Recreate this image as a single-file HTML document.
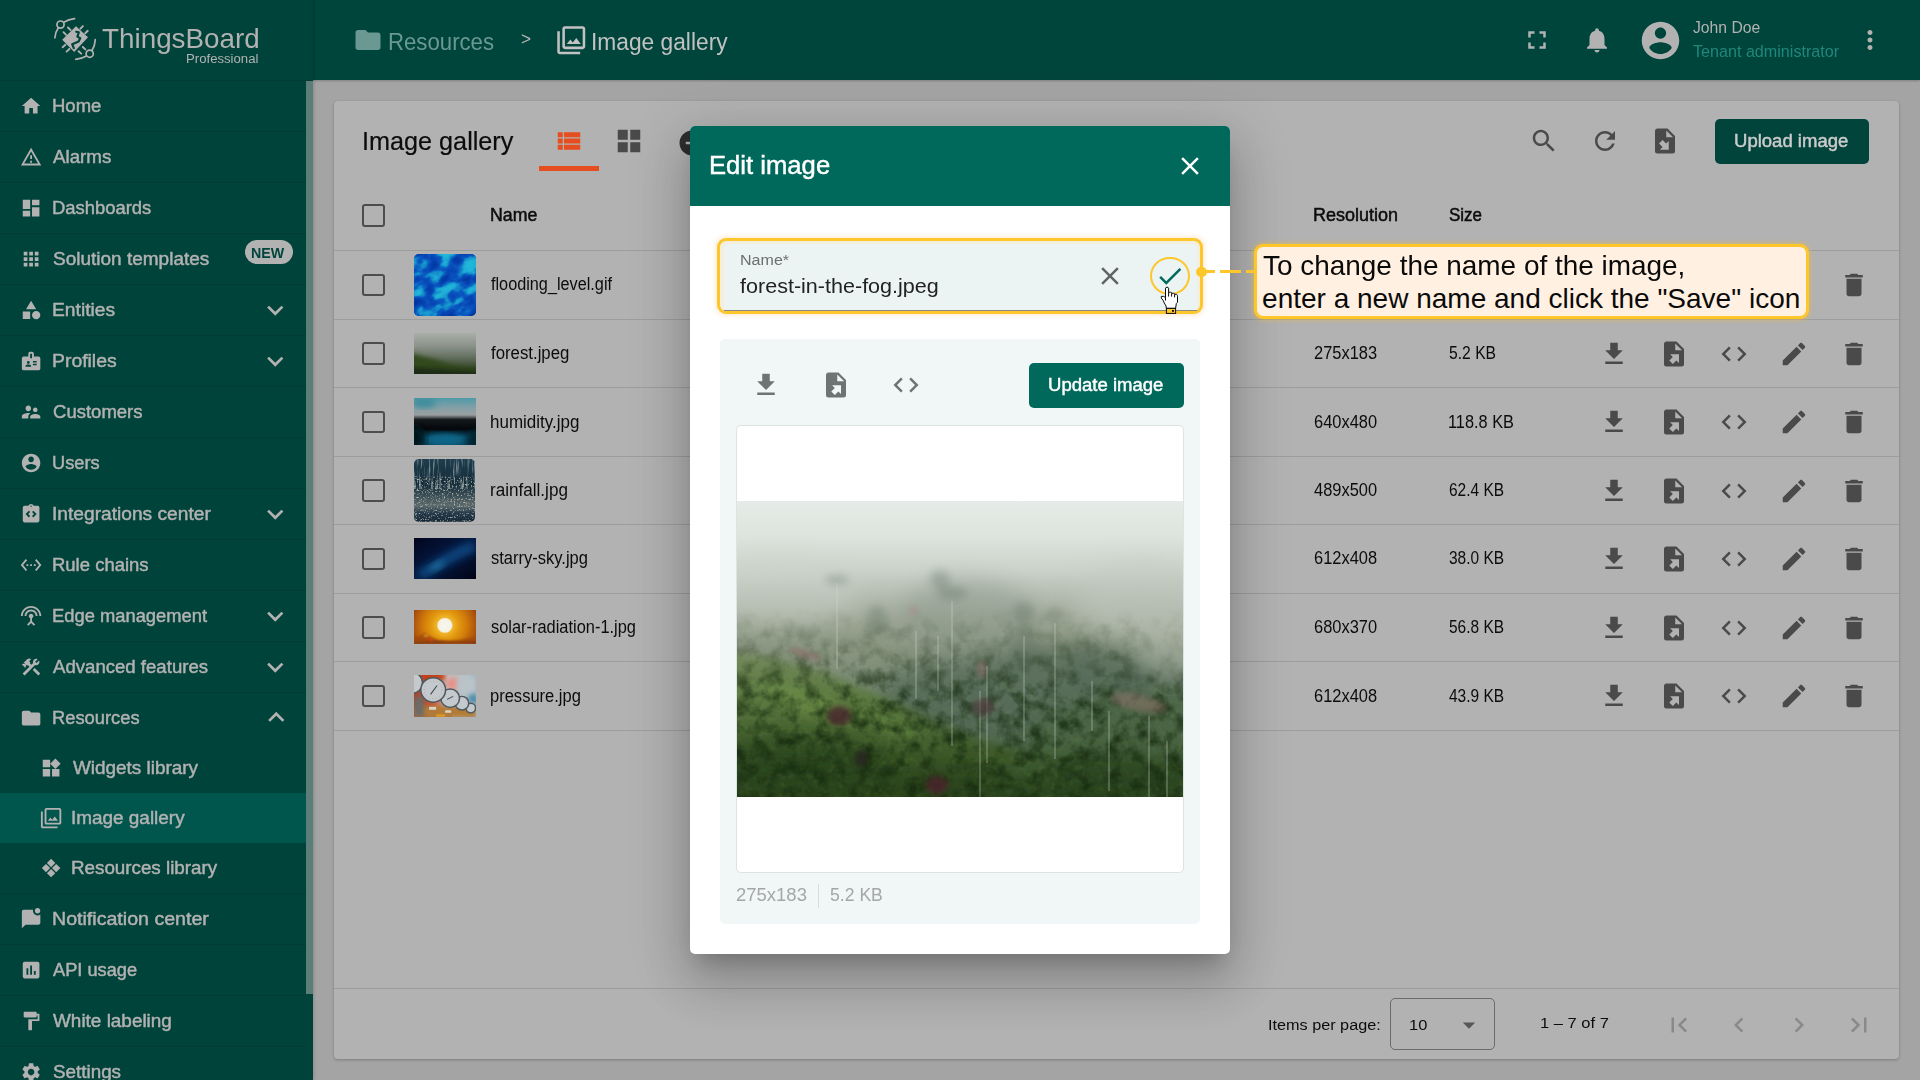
<!DOCTYPE html>
<html lang="en"><head><meta charset="utf-8"><title>ThingsBoard - Image gallery</title>
<style>
html,body{margin:0;padding:0}
body{width:1920px;height:1080px;overflow:hidden;position:relative;background:#a4a4a4;font-family:"Liberation Sans",sans-serif}
.g{position:absolute;left:0;top:0;width:0;height:0}
.b,.i,.t{position:absolute;display:block}
.t{white-space:nowrap;transform-origin:0 50%}
.b>svg{display:block}
</style></head>
<body>
<div class="g" id="app-shell">
<div class="b" style="left:0px;top:0px;width:1920px;height:80px;background:#00453c;box-shadow:0 1px 2px rgba(0,0,0,.22);"></div>
<div class="b" style="left:0px;top:0px;width:313px;height:1080px;background:#00433a;box-shadow:1px 0 3px rgba(0,0,0,.16);"></div>
<div class="b" style="left:313px;top:0px;width:1px;height:80px;background:#003a32;"></div>
<div class="b" style="left:306px;top:81px;width:7px;height:913px;background:#5c7e79;"></div>
<svg class="i" style="left:48px;top:12px" width="60" height="54" viewBox="48 12 60 54">
<g fill="none" stroke="#b2b2b2" stroke-width="1.7" stroke-linecap="round">
<circle cx="60.5" cy="24.6" r="3.6"/>
<path d="M63.8 22.3C67 20.3 70.500 19.200 74.600 18.700M58.300 27.800C56.200 30.800 55.200 34 54.900 37.800"/>
<circle cx="89.700" cy="53.700" r="3.600"/>
<path d="M86.400 56C83.200 57.900 79.700 59 75.700 59.300M92 50.500C94 47.500 95 44 95.300 39.600"/>
<path d="M68 27.500l2.600 2.600M63.500 32.200l2.600 2.600M80.500 28.700l2.400-2.600M85.200 33.200l2.600-2.400M82.800 47l2.600 2.400M78.600 51.200l2.600 2.400M62.600 47.200l2.800-2.400M66.600 51.600l2.800-2.600" stroke-width="1.9"/>
</g>
<path fill="#b2b2b2" d="M62.200 39.700L76 26.300 88 37.200 74.200 52z"/>
<path fill="none" stroke="#00443b" stroke-width="2.2" stroke-linecap="round" stroke-linejoin="round" d="M76.200 31.800l2.600 0.600l-1.400 4.200l2.800 1.600l-1.600 3.200l-6.400 2.800l1.600 4"/>
</svg>
<span class="t" style="left:101.8px;top:21px;font-size:28.1px;line-height:36px;color:#b2b2b2;transform:scaleX(0.9907);">ThingsBoard</span>
<span class="t" style="left:186.48px;top:50px;font-size:12.91px;line-height:17px;color:#b2b2b2;transform:scaleX(1.0195);">Professional</span>
<div class="b" style="left:0px;top:80px;width:313px;height:1px;background:#003c34;"></div>
<svg class="i" style="left:20.15px;top:94.7px;" width="22.2" height="22.2" viewBox="0 0 24 24"><path fill="#b2b2b2" d="M10 20v-6h4v6h5v-8h3L12 3 2 12h3v8z"/></svg>
<span class="t" style="left:51.98px;top:95px;font-size:18.08px;line-height:23px;color:#b2b2b2;-webkit-text-stroke:0.45px #b2b2b2;transform:scaleX(1.0229);">Home</span>
<div class="b" style="left:0px;top:131px;width:306px;height:1px;background:#003c34;"></div>
<svg class="i" style="left:20.15px;top:145.7px;" width="22.2" height="22.2" viewBox="0 0 24 24"><path fill="#b2b2b2" d="M12 5.99L19.53 19H4.47L12 5.99M12 2L1 21h22L12 2zm1 14h-2v2h2v-2zm0-6h-2v4h2v-4z"/></svg>
<span class="t" style="left:53px;top:146px;font-size:18.08px;line-height:23px;color:#b2b2b2;-webkit-text-stroke:0.45px #b2b2b2;transform:scaleX(1.0363);">Alarms</span>
<div class="b" style="left:0px;top:182px;width:306px;height:1px;background:#003c34;"></div>
<svg class="i" style="left:20.15px;top:196.7px;" width="22.2" height="22.2" viewBox="0 0 24 24"><path fill="#b2b2b2" d="M3 13h8V3H3v10zm0 8h8v-6H3v6zm10 0h8V11h-8v10zm0-18v6h8V3h-8z"/></svg>
<span class="t" style="left:51.98px;top:197px;font-size:18.08px;line-height:23px;color:#b2b2b2;-webkit-text-stroke:0.45px #b2b2b2;transform:scaleX(1.0188);">Dashboards</span>
<div class="b" style="left:0px;top:233px;width:306px;height:1px;background:#003c34;"></div>
<svg class="i" style="left:20.15px;top:247.7px;" width="22.2" height="22.2" viewBox="0 0 24 24"><path fill="#b2b2b2" d="M4 8h4V4H4v4zm6 12h4v-4h-4v4zm-6 0h4v-4H4v4zm0-6h4v-4H4v4zm6 0h4v-4h-4v4zm6-10v4h4V4h-4zm-6 4h4V4h-4v4zm6 6h4v-4h-4v4zm0 6h4v-4h-4v4z"/></svg>
<span class="t" style="left:53px;top:248px;font-size:18.08px;line-height:23px;color:#b2b2b2;-webkit-text-stroke:0.45px #b2b2b2;transform:scaleX(1.0508);">Solution templates</span>
<div class="b" style="left:244.5px;top:239.6px;width:48.7px;height:24.9px;background:#b2b2b2;border-radius:13px;"></div>
<span class="t" style="left:251.28px;top:243px;font-size:15.49px;line-height:20px;color:#00443b;font-weight:700;transform:scaleX(0.9180);">NEW</span>
<div class="b" style="left:0px;top:284px;width:306px;height:1px;background:#003c34;"></div>
<svg class="i" style="left:20.15px;top:298.7px;" width="22.2" height="22.2" viewBox="0 0 24 24"><path fill="#b2b2b2" d="M12 2l-5.5 9h11zM17.5 13a4.5 4.5 0 1 0 0 9a4.5 4.5 0 1 0 0-9zM3 13.5h8v8H3z"/></svg>
<span class="t" style="left:51.94px;top:299px;font-size:18.08px;line-height:23px;color:#b2b2b2;-webkit-text-stroke:0.45px #b2b2b2;transform:scaleX(1.0645);">Entities</span>
<svg class="i" style="left:259.35px;top:293.75px;" width="32.5" height="32.5" viewBox="0 0 24 24"><path fill="#b2b2b2" d="M16.59 8.59L12 13.17 7.41 8.59 6 10l6 6 6-6z"/></svg>
<div class="b" style="left:0px;top:335px;width:306px;height:1px;background:#003c34;"></div>
<svg class="i" style="left:20.15px;top:349.7px;" width="22.2" height="22.2" viewBox="0 0 24 24"><path fill="#b2b2b2" d="M20 7h-5V4c0-1.1-.9-2-2-2h-2c-1.1 0-2 .9-2 2v3H4c-1.1 0-2 .9-2 2v11c0 1.1.9 2 2 2h16c1.1 0 2-.9 2-2V9c0-1.1-.9-2-2-2zM9 12c.83 0 1.5.67 1.5 1.5S9.83 15 9 15s-1.5-.67-1.5-1.5S8.17 12 9 12zm3 6H6v-.75c0-1 2-1.5 3-1.5s3 .5 3 1.5V18zm1-9h-2V4h2v5zm5 7.5h-4V15h4v1.5zm0-3h-4V12h4v1.5z"/></svg>
<span class="t" style="left:51.93px;top:350px;font-size:18.08px;line-height:23px;color:#b2b2b2;-webkit-text-stroke:0.45px #b2b2b2;transform:scaleX(1.0719);">Profiles</span>
<svg class="i" style="left:259.35px;top:344.75px;" width="32.5" height="32.5" viewBox="0 0 24 24"><path fill="#b2b2b2" d="M16.59 8.59L12 13.17 7.41 8.59 6 10l6 6 6-6z"/></svg>
<div class="b" style="left:0px;top:386px;width:306px;height:1px;background:#003c34;"></div>
<svg class="i" style="left:20.15px;top:400.7px;" width="22.2" height="22.2" viewBox="0 0 24 24"><path fill="#b2b2b2" d="M16.5 12c1.38 0 2.49-1.12 2.49-2.5S17.88 7 16.5 7C15.12 7 14 8.12 14 9.5s1.12 2.5 2.5 2.5zM9 11c1.66 0 2.99-1.34 2.99-3S10.66 5 9 5C7.34 5 6 6.34 6 8s1.34 3 3 3zm7.5 3c-1.83 0-5.5.92-5.5 2.75V19h11v-2.25c0-1.83-3.67-2.75-5.5-2.75zM9 13c-2.33 0-7 1.17-7 3.5V19h7v-2.25c0-.85.33-2.34 2.37-3.47C10.5 13.1 9.66 13 9 13z"/></svg>
<span class="t" style="left:53px;top:401px;font-size:18.08px;line-height:23px;color:#b2b2b2;-webkit-text-stroke:0.45px #b2b2b2;transform:scaleX(1.0245);">Customers</span>
<div class="b" style="left:0px;top:437px;width:306px;height:1px;background:#003c34;"></div>
<svg class="i" style="left:20.15px;top:451.7px;" width="22.2" height="22.2" viewBox="0 0 24 24"><path fill="#b2b2b2" d="M12 2C6.48 2 2 6.48 2 12s4.48 10 10 10 10-4.48 10-10S17.52 2 12 2zm0 3c1.66 0 3 1.34 3 3s-1.34 3-3 3-3-1.34-3-3 1.34-3 3-3zm0 14.2c-2.5 0-4.71-1.28-6-3.22.03-1.99 4-3.08 6-3.08 1.99 0 5.97 1.09 6 3.08-1.29 1.94-3.5 3.22-6 3.22z"/></svg>
<span class="t" style="left:51.99px;top:452px;font-size:18.08px;line-height:23px;color:#b2b2b2;-webkit-text-stroke:0.45px #b2b2b2;transform:scaleX(1.0072);">Users</span>
<div class="b" style="left:0px;top:488px;width:306px;height:1px;background:#003c34;"></div>
<svg class="i" style="left:20.15px;top:502.7px;" width="22.2" height="22.2" viewBox="0 0 24 24"><path fill="#b2b2b2" d="M19 3h-4.18C14.4 1.84 13.3 1 12 1s-2.4.84-2.82 2H5c-1.1 0-2 .9-2 2v14c0 1.1.9 2 2 2h14c1.1 0 2-.9 2-2V5c0-1.1-.9-2-2-2zm-8 11.17l-1.41 1.42L6 12l3.59-3.59L11 9.83 8.83 12 11 14.17zm1-9.92c-.41 0-.75-.34-.75-.75s.34-.75.75-.75.75.34.75.75-.34.75-.75.75zm2.41 11.34L13 14.17 15.17 12 13 9.83l1.41-1.42L18 12l-3.59 3.59z"/></svg>
<span class="t" style="left:51.94px;top:503px;font-size:18.08px;line-height:23px;color:#b2b2b2;-webkit-text-stroke:0.45px #b2b2b2;transform:scaleX(1.0607);">Integrations center</span>
<svg class="i" style="left:259.35px;top:497.75px;" width="32.5" height="32.5" viewBox="0 0 24 24"><path fill="#b2b2b2" d="M16.59 8.59L12 13.17 7.41 8.59 6 10l6 6 6-6z"/></svg>
<div class="b" style="left:0px;top:539px;width:306px;height:1px;background:#003c34;"></div>
<svg class="i" style="left:20.15px;top:553.7px;" width="22.2" height="22.2" viewBox="0 0 24 24"><path fill="#b2b2b2" d="M7.77 6.76L6.23 5.48.82 12l5.41 6.52 1.54-1.28L3.42 12l4.35-5.24zM7 13h2v-2H7v2zm10-2h-2v2h2v-2zm-6 2h2v-2h-2v2zm6.77-7.52l-1.54 1.28L20.58 12l-4.35 5.24 1.54 1.28L23.18 12l-5.41-6.52z"/></svg>
<span class="t" style="left:51.98px;top:554px;font-size:18.08px;line-height:23px;color:#b2b2b2;-webkit-text-stroke:0.45px #b2b2b2;transform:scaleX(1.0223);">Rule chains</span>
<div class="b" style="left:0px;top:590px;width:306px;height:1px;background:#003c34;"></div>
<svg class="i" style="left:20.15px;top:604.7px;" width="22.2" height="22.2" viewBox="0 0 24 24"><path fill="#b2b2b2" d="M12 5c-3.87 0-7 3.13-7 7h2c0-2.76 2.24-5 5-5s5 2.24 5 5h2c0-3.87-3.13-7-7-7zm1 9.29c.88-.39 1.5-1.26 1.5-2.29 0-1.38-1.12-2.5-2.5-2.5S9.5 10.62 9.5 12c0 1.02.62 1.9 1.5 2.29v3.3L7.59 21 9 22.41l3-3 3 3L16.41 21 13 17.59v-3.3zM12 1C5.93 1 1 5.93 1 12h2c0-4.97 4.03-9 9-9s9 4.03 9 9h2c0-6.07-4.93-11-11-11z"/></svg>
<span class="t" style="left:51.99px;top:605px;font-size:18.08px;line-height:23px;color:#b2b2b2;-webkit-text-stroke:0.45px #b2b2b2;transform:scaleX(1.0149);">Edge management</span>
<svg class="i" style="left:259.35px;top:599.75px;" width="32.5" height="32.5" viewBox="0 0 24 24"><path fill="#b2b2b2" d="M16.59 8.59L12 13.17 7.41 8.59 6 10l6 6 6-6z"/></svg>
<div class="b" style="left:0px;top:641px;width:306px;height:1px;background:#003c34;"></div>
<svg class="i" style="left:20.15px;top:655.7px;" width="22.2" height="22.2" viewBox="0 0 24 24"><path fill="#b2b2b2" d="M13.783 15.172l2.121-2.121 5.996 5.996-2.121 2.121zM17.5 10c1.93 0 3.5-1.57 3.5-3.5 0-.58-.16-1.12-.41-1.6l-2.7 2.7-1.49-1.49 2.7-2.7c-.48-.25-1.02-.41-1.6-.41C15.57 3 14 4.57 14 6.5c0 .41.08.8.21 1.16l-1.85 1.85-1.78-1.78.71-.71-1.41-1.41L12 3.49c-1.17-1.17-3.07-1.17-4.24 0L4.22 7.03l1.41 1.41H2.81l-.71.71 3.54 3.54.71-.71V9.15l1.41 1.41.71-.71 1.78 1.78-7.41 7.41 2.12 2.12L16.34 9.79c.36.13.75.21 1.16.21z"/></svg>
<span class="t" style="left:53px;top:656px;font-size:18.08px;line-height:23px;color:#b2b2b2;-webkit-text-stroke:0.45px #b2b2b2;transform:scaleX(1.0285);">Advanced features</span>
<svg class="i" style="left:259.35px;top:650.75px;" width="32.5" height="32.5" viewBox="0 0 24 24"><path fill="#b2b2b2" d="M16.59 8.59L12 13.17 7.41 8.59 6 10l6 6 6-6z"/></svg>
<div class="b" style="left:0px;top:692px;width:306px;height:1px;background:#003c34;"></div>
<svg class="i" style="left:20.15px;top:706.7px;" width="22.2" height="22.2" viewBox="0 0 24 24"><path fill="#b2b2b2" d="M10 4H4c-1.1 0-1.99.9-1.99 2L2 18c0 1.1.9 2 2 2h16c1.1 0 2-.9 2-2V8c0-1.1-.9-2-2-2h-8l-2-2z"/></svg>
<span class="t" style="left:51.99px;top:707px;font-size:18.08px;line-height:23px;color:#b2b2b2;-webkit-text-stroke:0.45px #b2b2b2;transform:scaleX(1.0132);">Resources</span>
<svg class="i" style="left:260.35px;top:701.45px;" width="32.5" height="32.5" viewBox="0 0 24 24"><path fill="#b2b2b2" d="M12 8l-6 6 1.41 1.41L12 10.83l4.59 4.58L18 14z"/></svg>
<svg class="i" style="left:40.15px;top:756.7px;" width="22.2" height="22.2" viewBox="0 0 24 24"><path fill="#b2b2b2" d="M13 13v8h8v-8h-8zM3 21h8v-8H3v8zM3 3v8h8V3H3zm13.66-1.31L11 7.34 16.66 13l5.66-5.66-5.66-5.65z"/></svg>
<span class="t" style="left:72.5px;top:757px;font-size:18.08px;line-height:23px;color:#b2b2b2;-webkit-text-stroke:0.45px #b2b2b2;transform:scaleX(1.0460);">Widgets library</span>
<div class="b" style="left:0px;top:793px;width:306px;height:50px;background:#00554d;"></div>
<svg class="i" style="left:40.15px;top:806.7px;" width="22.2" height="22.2" viewBox="0 0 24 24"><path fill="#b2b2b2" d="M15.96 10.29l-2.75 3.54-1.96-2.36L8.5 15h11l-3.54-4.71zM3 5H1v16c0 1.1.9 2 2 2h16v-2H3V5zm18-4H7c-1.1 0-2 .9-2 2v14c0 1.1.9 2 2 2h14c1.1 0 2-.9 2-2V3c0-1.1-.9-2-2-2zm0 16H7V3h14v14z"/></svg>
<span class="t" style="left:71.45px;top:807px;font-size:18.08px;line-height:23px;color:#b2b2b2;-webkit-text-stroke:0.45px #b2b2b2;transform:scaleX(1.0467);">Image gallery</span>
<svg class="i" style="left:40.15px;top:856.7px;" width="22.2" height="22.2" viewBox="0 0 24 24"><path fill="#b2b2b2" d="M12 2L7.5 6.5 12 11l4.500-4.500zM6.500 7.500L2 12l4.500 4.500L11 12zM17.500 7.500L13 12l4.500 4.500L22 12zM12 13l-4.500 4.500L12 22l4.500-4.500z"/></svg>
<span class="t" style="left:71.46px;top:857px;font-size:18.08px;line-height:23px;color:#b2b2b2;-webkit-text-stroke:0.45px #b2b2b2;transform:scaleX(1.0386);">Resources library</span>
<div class="b" style="left:0px;top:893px;width:306px;height:1px;background:#003c34;"></div>
<svg class="i" style="left:20.15px;top:907.7px;" width="22.2" height="22.2" viewBox="0 0 24 24"><path fill="#b2b2b2" d="M22 6.98V16c0 1.1-.9 2-2 2H6l-4 4V4c0-1.1.9-2 2-2h10.1c-.06.32-.1.66-.1 1 0 2.76 2.24 5 5 5 1.13 0 2.16-.39 3-1.020zM16 3c0 1.66 1.34 3 3 3s3-1.34 3-3-1.34-3-3-3-3 1.340-3 3z"/></svg>
<span class="t" style="left:51.92px;top:908px;font-size:18.08px;line-height:23px;color:#b2b2b2;-webkit-text-stroke:0.45px #b2b2b2;transform:scaleX(1.0840);">Notification center</span>
<div class="b" style="left:0px;top:944px;width:306px;height:1px;background:#003c34;"></div>
<svg class="i" style="left:20.15px;top:958.7px;" width="22.2" height="22.2" viewBox="0 0 24 24"><path fill="#b2b2b2" d="M19 3H5c-1.1 0-2 .9-2 2v14c0 1.1.9 2 2 2h14c1.1 0 2-.9 2-2V5c0-1.1-.9-2-2-2zM9 17H7v-7h2v7zm4 0h-2V7h2v10zm4 0h-2v-4h2v4z"/></svg>
<span class="t" style="left:53px;top:959px;font-size:18.08px;line-height:23px;color:#b2b2b2;-webkit-text-stroke:0.45px #b2b2b2;transform:scaleX(1.0076);">API usage</span>
<div class="b" style="left:0px;top:995px;width:306px;height:1px;background:#003c34;"></div>
<svg class="i" style="left:20.15px;top:1009.7px;" width="22.2" height="22.2" viewBox="0 0 24 24"><path fill="#b2b2b2" d="M18 4V3c0-.55-.45-1-1-1H5c-.55 0-1 .45-1 1v4c0 .55.45 1 1 1h12c.55 0 1-.45 1-1V6h1v4H9v11c0 .55.45 1 1 1h2c.55 0 1-.45 1-1v-9h8V4h-3z"/></svg>
<span class="t" style="left:53px;top:1010px;font-size:18.08px;line-height:23px;color:#b2b2b2;-webkit-text-stroke:0.45px #b2b2b2;transform:scaleX(1.0467);">White labeling</span>
<div class="b" style="left:0px;top:1046px;width:306px;height:1px;background:#003c34;"></div>
<svg class="i" style="left:20.15px;top:1060.7px;" width="22.2" height="22.2" viewBox="0 0 24 24"><path fill="#b2b2b2" d="M19.14 12.94c.04-.3.06-.61.06-.94 0-.32-.02-.64-.07-.94l2.03-1.58c.18-.14.23-.41.12-.61l-1.92-3.32c-.12-.22-.37-.29-.59-.22l-2.39.96c-.5-.38-1.03-.7-1.62-.94l-.36-2.54c-.04-.24-.24-.41-.48-.41h-3.84c-.24 0-.43.17-.47.41l-.36 2.54c-.59.24-1.13.57-1.62.94l-2.39-.96c-.22-.08-.47 0-.59.22L2.74 8.87c-.12.21-.08.47.12.61l2.03 1.58c-.05.3-.09.63-.09.94s.02.64.07.94l-2.03 1.58c-.18.14-.23.41-.12.61l1.92 3.32c.12.22.37.29.59.22l2.39-.96c.5.38 1.03.7 1.62.94l.36 2.54c.05.24.24.41.48.41h3.84c.24 0 .44-.17.47-.41l.36-2.54c.59-.24 1.13-.56 1.62-.94l2.39.96c.22.08.47 0 .59-.22l1.92-3.32c.12-.22.07-.47-.12-.61l-2.01-1.58zM12 15.6c-1.98 0-3.6-1.62-3.6-3.6s1.62-3.6 3.6-3.6 3.6 1.62 3.6 3.6-1.62 3.6-3.6 3.6z"/></svg>
<span class="t" style="left:53px;top:1061px;font-size:18.08px;line-height:23px;color:#b2b2b2;-webkit-text-stroke:0.45px #b2b2b2;transform:scaleX(1.0416);">Settings</span>
<div class="b" style="left:0px;top:1097px;width:306px;height:1px;background:#003c34;"></div>
<svg class="i" style="left:352.5px;top:25px;" width="30" height="30" viewBox="0 0 24 24"><path fill="#6a9892" d="M10 4H4c-1.1 0-1.99.9-1.99 2L2 18c0 1.1.9 2 2 2h16c1.1 0 2-.9 2-2V8c0-1.1-.9-2-2-2h-8l-2-2z"/></svg>
<span class="t" style="left:388.3px;top:27px;font-size:23.24px;line-height:30px;color:#6a9892;transform:scaleX(0.9549);">Resources</span>
<span class="t" style="left:520.8px;top:28px;font-size:17.56px;line-height:22px;color:#b8b8b8;transform:scaleX(0.9800);">&gt;</span>
<svg class="i" style="left:556.25px;top:24.5px;" width="30.5" height="30.5" viewBox="0 0 24 24"><path fill="#c2c2c2" d="M15.96 10.29l-2.75 3.54-1.96-2.36L8.5 15h11l-3.54-4.71zM3 5H1v16c0 1.1.9 2 2 2h16v-2H3V5zm18-4H7c-1.1 0-2 .9-2 2v14c0 1.1.9 2 2 2h14c1.1 0 2-.9 2-2V3c0-1.1-.9-2-2-2zm0 16H7V3h14v14z"/></svg>
<span class="t" style="left:591.04px;top:27px;font-size:23.24px;line-height:30px;color:#c2c2c2;transform:scaleX(0.9793);">Image gallery</span>
<svg class="i" style="left:1522.4px;top:25px;" width="30" height="30" viewBox="0 0 24 24"><path fill="#b2b2b2" d="M7 14H5v5h5v-2H7v-3zm-2-4h2V7h3V5H5v5zm12 7h-3v2h5v-5h-2v3zM14 5v2h3v3h2V5h-5z"/></svg>
<svg class="i" style="left:1582.25px;top:25.25px;" width="30" height="30" viewBox="0 0 24 24"><path fill="#b2b2b2" d="M12 22c1.1 0 2-.9 2-2h-4c0 1.1.89 2 2 2zm6-6v-5c0-3.07-1.64-5.64-4.5-6.32V4c0-.83-.67-1.5-1.5-1.5s-1.5.67-1.5 1.5v.68C7.63 5.36 6 7.92 6 11v5l-2 2v1h16v-1l-2-2z"/></svg>
<svg class="i" style="left:1637.5px;top:18px;" width="45" height="45" viewBox="0 0 24 24"><path fill="#b2b2b2" d="M12 2C6.48 2 2 6.48 2 12s4.48 10 10 10 10-4.48 10-10S17.52 2 12 2zm0 3c1.66 0 3 1.34 3 3s-1.34 3-3 3-3-1.34-3-3 1.34-3 3-3zm0 14.2c-2.5 0-4.71-1.28-6-3.22.03-1.99 4-3.08 6-3.08 1.99 0 5.97 1.09 6 3.08-1.29 1.94-3.5 3.22-6 3.22z"/></svg>
<span class="t" style="left:1693px;top:17px;font-size:16.79px;line-height:21px;color:#b2b2b2;transform:scaleX(0.9370);">John Doe</span>
<span class="t" style="left:1693px;top:41px;font-size:16.79px;line-height:21px;color:#20877a;transform:scaleX(0.9610);">Tenant administrator</span>
<svg class="i" style="left:1855px;top:25px;" width="30" height="30" viewBox="0 0 24 24"><path fill="#b2b2b2" d="M12 8c1.1 0 2-.9 2-2s-.9-2-2-2-2 .9-2 2 .9 2 2 2zm0 2c-1.1 0-2 .9-2 2s.9 2 2 2 2-.9 2-2-.9-2-2-2zm0 6c-1.1 0-2 .9-2 2s.9 2 2 2 2-.9 2-2-.9-2-2-2z"/></svg>
</div>
<main class="g" id="image-gallery">
<div class="b" style="left:334px;top:100.7px;width:1565px;height:958px;background:#b2b2b2;border-radius:4px;box-shadow:0 1px 3px rgba(0,0,0,.25);"></div>
<span class="t" style="left:362.3px;top:125px;font-size:25.82px;line-height:33px;color:#0c0c0c;-webkit-text-stroke:0.2px #0c0c0c;transform:scaleX(0.9768);">Image gallery</span>
<svg class="i" style="left:554.4px;top:126.25px;" width="30" height="30" viewBox="0 0 24 24"><path fill="#e64e1f" d="M3 14h4v-4H3v4zm0 5h4v-4H3v4zM3 9h4V5H3v4zm5 5h13v-4H8v4zm0 5h13v-4H8v4zM8 5v4h13V5H8z"/></svg>
<div class="b" style="left:539px;top:166px;width:60px;height:5px;background:#e64e1f;"></div>
<svg class="i" style="left:614px;top:126px;" width="30" height="30" viewBox="0 0 24 24"><path fill="#4a4a4a" d="M3 3h8v8H3zm0 10h8v8H3zM13 3h8v8h-8zm0 10h8v8h-8z"/></svg>
<svg class="i" style="left:676.5px;top:127.5px;" width="30" height="30" viewBox="0 0 24 24"><path fill="#2e2e2e" d="M12 2C6.48 2 2 6.48 2 12s4.48 10 10 10 10-4.48 10-10S17.52 2 12 2zm5 11H7v-2h10v2z"/></svg>
<svg class="i" style="left:1528.75px;top:126.25px;" width="30" height="30" viewBox="0 0 24 24"><path fill="#4a4a4a" d="M15.5 14h-.79l-.28-.27C15.41 12.59 16 11.11 16 9.5 16 5.91 13.09 3 9.5 3S3 5.91 3 9.5 5.91 16 9.5 16c1.61 0 3.09-.59 4.23-1.57l.27.28v.79l5 4.99L20.49 19l-4.99-5zm-6 0C7.01 14 5 11.99 5 9.5S7.01 5 9.5 5 14 7.01 14 9.5 11.99 14 9.5 14z"/></svg>
<svg class="i" style="left:1589.5px;top:126.25px;" width="30" height="30" viewBox="0 0 24 24"><path fill="#4a4a4a" d="M17.65 6.35C16.2 4.9 14.21 4 12 4c-4.42 0-7.99 3.58-7.99 8s3.57 8 7.99 8c3.73 0 6.84-2.55 7.73-6h-2.08c-.82 2.33-3.04 4-5.65 4-3.31 0-6-2.69-6-6s2.69-6 6-6c1.66 0 3.14.69 4.22 1.78L13 11h7V4l-2.35 2.35z"/></svg>
<svg class="i" style="left:1650px;top:126.25px;" width="30" height="30" viewBox="0 0 24 24"><path fill="#4a4a4a" d="M6 2C4.89 2 4 2.9 4 4V20A2 2 0 0 0 6 22H18A2 2 0 0 0 20 20V8L14 2M13 3.5L18.5 9H13M10.05 11.22L12.88 14.05L15 11.93V19H7.93L10.05 16.88L7.22 14.05"/></svg>
<div class="b" style="left:1715px;top:119.25px;width:154px;height:44.5px;background:#00443b;border-radius:5px;"></div>
<span class="t" style="left:1733.98px;top:130px;font-size:18.08px;line-height:23px;color:#cccccc;-webkit-text-stroke:0.45px #cccccc;transform:scaleX(1.0249);">Upload image</span>
<div class="b" style="left:362.25px;top:204.25px;width:22.5px;height:22.5px;border:2.5px solid #4d4d4d;border-radius:3px;box-sizing:border-box;"></div>
<span class="t" style="left:490.27px;top:204px;font-size:18.08px;line-height:23px;color:#0c0c0c;-webkit-text-stroke:0.5px #0c0c0c;transform:scaleX(0.9805);">Name</span>
<span class="t" style="left:1313px;top:204px;font-size:18.08px;line-height:23px;color:#0c0c0c;-webkit-text-stroke:0.5px #0c0c0c;transform:scaleX(0.9956);">Resolution</span>
<span class="t" style="left:1449px;top:204px;font-size:18.08px;line-height:23px;color:#0c0c0c;-webkit-text-stroke:0.5px #0c0c0c;transform:scaleX(0.9398);">Size</span>
<div class="b" style="left:334px;top:250px;width:1565px;height:1px;background:#9d9d9d;"></div>
<div class="b" style="left:334px;top:319px;width:1565px;height:1px;background:#9d9d9d;"></div>
<div class="b" style="left:334px;top:387px;width:1565px;height:1px;background:#9d9d9d;"></div>
<div class="b" style="left:334px;top:456px;width:1565px;height:1px;background:#9d9d9d;"></div>
<div class="b" style="left:334px;top:524px;width:1565px;height:1px;background:#9d9d9d;"></div>
<div class="b" style="left:334px;top:593px;width:1565px;height:1px;background:#9d9d9d;"></div>
<div class="b" style="left:334px;top:661px;width:1565px;height:1px;background:#9d9d9d;"></div>
<div class="b" style="left:334px;top:730px;width:1565px;height:1px;background:#9d9d9d;"></div>
<div class="b" style="left:362.25px;top:273.75px;width:22.5px;height:22.5px;border:2.5px solid #4d4d4d;border-radius:3px;box-sizing:border-box;"></div>
<div class="b" style="left:414px;top:253.8px;width:62.3px;height:62.3px;background:#888;border-radius:5px;overflow:hidden;"><svg width="62.300" height="62.300" viewBox="0 0 62 62" preserveAspectRatio="none">
<defs><filter id="fw" x="0" y="0" width="100%" height="100%" color-interpolation-filters="sRGB"><feTurbulence type="fractalNoise" baseFrequency="0.085 0.13" numOctaves="3" seed="4"/>
<feColorMatrix type="matrix" values="1 0 0 0 0  1 0 0 0 0  1 0 0 0 0  0 0 0 0 1"/>
<feComponentTransfer><feFuncR type="table" tableValues="0 0 0.010 0.020 0.030 0.040 0.080 0.120 0.130 0.130 0.130"/><feFuncG type="table" tableValues="0.200 0.200 0.220 0.250 0.290 0.360 0.560 0.680 0.720 0.720 0.720"/><feFuncB type="table" tableValues="0.560 0.580 0.620 0.680 0.720 0.760 0.800 0.840 0.850 0.850 0.850"/></feComponentTransfer></filter></defs>
<rect width="62" height="62" fill="#0a5cb8"/>
<rect width="62" height="62" filter="url(#fw)" transform="rotate(-25 31 31) scale(1.500) translate(-10 -10)"/>
</svg></div>
<span class="t" style="left:491px;top:273px;font-size:18.08px;line-height:23px;color:#0c0c0c;transform:scaleX(0.8986);">flooding_level.gif</span>
<svg class="i" style="left:1599px;top:270px;" width="30" height="30" viewBox="0 0 24 24"><path fill="#4a4a4a" d="M19 9h-4V3H9v6H5l7 7 7-7zM5 18v2h14v-2H5z"/></svg>
<svg class="i" style="left:1659px;top:270px;" width="30" height="30" viewBox="0 0 24 24"><path fill="#4a4a4a" d="M6 2C4.89 2 4 2.9 4 4V20A2 2 0 0 0 6 22H18A2 2 0 0 0 20 20V8L14 2M13 3.5L18.5 9H13M8.93 12.22H16V19.29L13.88 17.17L11.05 20L8.22 17.17L11.05 14.35"/></svg>
<svg class="i" style="left:1719px;top:270px;" width="30" height="30" viewBox="0 0 24 24"><path fill="#4a4a4a" d="M9.4 16.6L4.8 12l4.6-4.6L8 6l-6 6 6 6 1.4-1.4zm5.2 0l4.6-4.6-4.6-4.6L16 6l6 6-6 6-1.4-1.4z"/></svg>
<svg class="i" style="left:1779px;top:270px;" width="30" height="30" viewBox="0 0 24 24"><path fill="#4a4a4a" d="M3 17.25V21h3.75L17.81 9.94l-3.75-3.75L3 17.25zM20.71 7.04c.39-.39.39-1.02 0-1.41l-2.34-2.34c-.39-.39-1.02-.39-1.41 0l-1.83 1.83 3.75 3.75 1.83-1.83z"/></svg>
<svg class="i" style="left:1839px;top:270px;" width="30" height="30" viewBox="0 0 24 24"><path fill="#4a4a4a" d="M6 19c0 1.1.9 2 2 2h8c1.1 0 2-.9 2-2V7H6v12zM19 4h-3.5l-1-1h-5l-1 1H5v2h14V4z"/></svg>
<div class="b" style="left:362.25px;top:342.25px;width:22.5px;height:22.5px;border:2.5px solid #4d4d4d;border-radius:3px;box-sizing:border-box;"></div>
<div class="b" style="left:414px;top:333px;width:62.3px;height:41.3px;background:#888;border-radius:0px;overflow:hidden;"><svg width="62.300" height="41.300" viewBox="0 0 62 41" preserveAspectRatio="none">
<defs><linearGradient id="g1" x1="0" y1="0" x2="0" y2="1"><stop offset="0" stop-color="#a9aea9"/><stop offset=".3" stop-color="#8d948b"/><stop offset=".55" stop-color="#6a7566"/><stop offset=".8" stop-color="#3f4f33"/><stop offset="1" stop-color="#27351d"/></linearGradient>
<filter id="b1" x="-20%" y="-20%" width="140%" height="140%"><feGaussianBlur stdDeviation="2"/></filter></defs>
<rect width="62" height="41" fill="url(#g1)"/>
<path d="M-4 20L20 26 40 33 66 35V45H-4z" fill="#33491f" filter="url(#b1)"/>
<path d="M-4 34L30 36 66 38V45H-4z" fill="#1d2a14" filter="url(#b1)"/>
</svg></div>
<span class="t" style="left:491px;top:342px;font-size:18.08px;line-height:23px;color:#0c0c0c;transform:scaleX(0.9285);">forest.jpeg</span>
<span class="t" style="left:1314px;top:342px;font-size:18.08px;line-height:23px;color:#0c0c0c;transform:scaleX(0.9090);">275x183</span>
<span class="t" style="left:1449px;top:342px;font-size:18.08px;line-height:23px;color:#0c0c0c;transform:scaleX(0.8670);">5.2 KB</span>
<svg class="i" style="left:1599px;top:338.5px;" width="30" height="30" viewBox="0 0 24 24"><path fill="#4a4a4a" d="M19 9h-4V3H9v6H5l7 7 7-7zM5 18v2h14v-2H5z"/></svg>
<svg class="i" style="left:1659px;top:338.5px;" width="30" height="30" viewBox="0 0 24 24"><path fill="#4a4a4a" d="M6 2C4.89 2 4 2.9 4 4V20A2 2 0 0 0 6 22H18A2 2 0 0 0 20 20V8L14 2M13 3.5L18.5 9H13M8.93 12.22H16V19.29L13.88 17.17L11.05 20L8.22 17.17L11.05 14.35"/></svg>
<svg class="i" style="left:1719px;top:338.5px;" width="30" height="30" viewBox="0 0 24 24"><path fill="#4a4a4a" d="M9.4 16.6L4.8 12l4.6-4.6L8 6l-6 6 6 6 1.4-1.4zm5.2 0l4.6-4.6-4.6-4.6L16 6l6 6-6 6-1.4-1.4z"/></svg>
<svg class="i" style="left:1779px;top:338.5px;" width="30" height="30" viewBox="0 0 24 24"><path fill="#4a4a4a" d="M3 17.25V21h3.75L17.81 9.94l-3.75-3.75L3 17.25zM20.71 7.04c.39-.39.39-1.02 0-1.41l-2.34-2.34c-.39-.39-1.02-.39-1.41 0l-1.83 1.83 3.75 3.75 1.83-1.83z"/></svg>
<svg class="i" style="left:1839px;top:338.5px;" width="30" height="30" viewBox="0 0 24 24"><path fill="#4a4a4a" d="M6 19c0 1.1.9 2 2 2h8c1.1 0 2-.9 2-2V7H6v12zM19 4h-3.5l-1-1h-5l-1 1H5v2h14V4z"/></svg>
<div class="b" style="left:362.25px;top:410.75px;width:22.5px;height:22.5px;border:2.5px solid #4d4d4d;border-radius:3px;box-sizing:border-box;"></div>
<div class="b" style="left:414px;top:397.8px;width:62.3px;height:47px;background:#888;border-radius:0px;overflow:hidden;"><svg width="62.300" height="47" viewBox="0 0 62 47" preserveAspectRatio="none">
<defs><linearGradient id="g2" x1="0" y1="0" x2="0" y2="1"><stop offset="0" stop-color="#4f9aa8"/><stop offset=".22" stop-color="#86a0a6"/><stop offset=".36" stop-color="#9a9fa0"/><stop offset=".46" stop-color="#15191c"/><stop offset=".66" stop-color="#03070b"/><stop offset=".84" stop-color="#0b506e"/><stop offset="1" stop-color="#0a4560"/></linearGradient>
<filter id="b2" x="-20%" y="-20%" width="140%" height="140%"><feGaussianBlur stdDeviation="3"/></filter></defs>
<rect width="62" height="47" fill="url(#g2)"/>
<ellipse cx="31" cy="42" rx="18" ry="6" fill="#10688a" filter="url(#b2)"/>
<ellipse cx="2" cy="40" rx="9" ry="12" fill="#02131f" filter="url(#b2)"/>
<ellipse cx="60" cy="42" rx="7" ry="10" fill="#02202f" filter="url(#b2)"/>
<ellipse cx="10" cy="5" rx="12" ry="5" fill="#3c8b9c" filter="url(#b2)"/>
</svg></div>
<span class="t" style="left:490.06px;top:411px;font-size:18.08px;line-height:23px;color:#0c0c0c;transform:scaleX(0.9391);">humidity.jpg</span>
<span class="t" style="left:1314px;top:411px;font-size:18.08px;line-height:23px;color:#0c0c0c;transform:scaleX(0.9090);">640x480</span>
<span class="t" style="left:1448.1px;top:411px;font-size:18.08px;line-height:23px;color:#0c0c0c;transform:scaleX(0.9031);">118.8 KB</span>
<svg class="i" style="left:1599px;top:407px;" width="30" height="30" viewBox="0 0 24 24"><path fill="#4a4a4a" d="M19 9h-4V3H9v6H5l7 7 7-7zM5 18v2h14v-2H5z"/></svg>
<svg class="i" style="left:1659px;top:407px;" width="30" height="30" viewBox="0 0 24 24"><path fill="#4a4a4a" d="M6 2C4.89 2 4 2.9 4 4V20A2 2 0 0 0 6 22H18A2 2 0 0 0 20 20V8L14 2M13 3.5L18.5 9H13M8.93 12.22H16V19.29L13.88 17.17L11.05 20L8.22 17.17L11.05 14.35"/></svg>
<svg class="i" style="left:1719px;top:407px;" width="30" height="30" viewBox="0 0 24 24"><path fill="#4a4a4a" d="M9.4 16.6L4.8 12l4.6-4.6L8 6l-6 6 6 6 1.4-1.4zm5.2 0l4.6-4.6-4.6-4.6L16 6l6 6-6 6-1.4-1.4z"/></svg>
<svg class="i" style="left:1779px;top:407px;" width="30" height="30" viewBox="0 0 24 24"><path fill="#4a4a4a" d="M3 17.25V21h3.75L17.81 9.94l-3.75-3.75L3 17.25zM20.71 7.04c.39-.39.39-1.02 0-1.41l-2.34-2.34c-.39-.39-1.02-.39-1.41 0l-1.83 1.83 3.75 3.75 1.83-1.83z"/></svg>
<svg class="i" style="left:1839px;top:407px;" width="30" height="30" viewBox="0 0 24 24"><path fill="#4a4a4a" d="M6 19c0 1.1.9 2 2 2h8c1.1 0 2-.9 2-2V7H6v12zM19 4h-3.5l-1-1h-5l-1 1H5v2h14V4z"/></svg>
<div class="b" style="left:362.25px;top:479.25px;width:22.5px;height:22.5px;border:2.5px solid #4d4d4d;border-radius:3px;box-sizing:border-box;"></div>
<div class="b" style="left:414px;top:459.25px;width:61.2px;height:62.75px;background:#888;border-radius:5px;overflow:hidden;"><svg width="61.200" height="62.750" viewBox="0 0 61 63" preserveAspectRatio="none">
<defs><linearGradient id="g3" x1="0" y1="0" x2="0" y2="1"><stop offset="0" stop-color="#1f3d4d"/><stop offset=".4" stop-color="#142c3a"/><stop offset=".58" stop-color="#3a4d56"/><stop offset=".74" stop-color="#5c6a6c"/><stop offset=".86" stop-color="#24394a"/><stop offset="1" stop-color="#142836"/></linearGradient>
<filter id="f3" x="0" y="0" width="100%" height="100%" color-interpolation-filters="sRGB"><feTurbulence type="fractalNoise" baseFrequency="0.550 0.050" numOctaves="2" seed="3"/>
<feColorMatrix type="matrix" values="0 0 0 0 0.560  0 0 0 0 0.620  0 0 0 0 0.640  3 0 0 0 -1.500"/></filter>
<filter id="f3b" x="0" y="0" width="100%" height="100%" color-interpolation-filters="sRGB"><feTurbulence type="fractalNoise" baseFrequency="0.600 0.550" numOctaves="2" seed="11"/>
<feColorMatrix type="matrix" values="0 0 0 0 0.680  0 0 0 0 0.690  0 0 0 0 0.650  4 0 0 0 -2.150"/></filter></defs>
<rect width="61" height="63" fill="url(#g3)"/>
<rect width="61" height="30" filter="url(#f3)"/>
<rect y="18" width="61" height="45" filter="url(#f3b)"/>
</svg></div>
<span class="t" style="left:490.05px;top:479px;font-size:18.08px;line-height:23px;color:#0c0c0c;transform:scaleX(0.9459);">rainfall.jpg</span>
<span class="t" style="left:1314px;top:479px;font-size:18.08px;line-height:23px;color:#0c0c0c;transform:scaleX(0.9090);">489x500</span>
<span class="t" style="left:1449px;top:479px;font-size:18.08px;line-height:23px;color:#0c0c0c;transform:scaleX(0.8558);">62.4 KB</span>
<svg class="i" style="left:1599px;top:475.5px;" width="30" height="30" viewBox="0 0 24 24"><path fill="#4a4a4a" d="M19 9h-4V3H9v6H5l7 7 7-7zM5 18v2h14v-2H5z"/></svg>
<svg class="i" style="left:1659px;top:475.5px;" width="30" height="30" viewBox="0 0 24 24"><path fill="#4a4a4a" d="M6 2C4.89 2 4 2.9 4 4V20A2 2 0 0 0 6 22H18A2 2 0 0 0 20 20V8L14 2M13 3.5L18.5 9H13M8.93 12.22H16V19.29L13.88 17.17L11.05 20L8.22 17.17L11.05 14.35"/></svg>
<svg class="i" style="left:1719px;top:475.5px;" width="30" height="30" viewBox="0 0 24 24"><path fill="#4a4a4a" d="M9.4 16.6L4.8 12l4.6-4.6L8 6l-6 6 6 6 1.4-1.4zm5.2 0l4.6-4.6-4.6-4.6L16 6l6 6-6 6-1.4-1.4z"/></svg>
<svg class="i" style="left:1779px;top:475.5px;" width="30" height="30" viewBox="0 0 24 24"><path fill="#4a4a4a" d="M3 17.25V21h3.75L17.81 9.94l-3.75-3.75L3 17.25zM20.71 7.04c.39-.39.39-1.02 0-1.41l-2.34-2.34c-.39-.39-1.02-.39-1.41 0l-1.83 1.83 3.75 3.75 1.83-1.83z"/></svg>
<svg class="i" style="left:1839px;top:475.5px;" width="30" height="30" viewBox="0 0 24 24"><path fill="#4a4a4a" d="M6 19c0 1.1.9 2 2 2h8c1.1 0 2-.9 2-2V7H6v12zM19 4h-3.5l-1-1h-5l-1 1H5v2h14V4z"/></svg>
<div class="b" style="left:362.25px;top:547.75px;width:22.5px;height:22.5px;border:2.5px solid #4d4d4d;border-radius:3px;box-sizing:border-box;"></div>
<div class="b" style="left:414px;top:537.8px;width:62.3px;height:41.7px;background:#888;border-radius:0px;overflow:hidden;"><svg width="62.300" height="41.700" viewBox="0 0 62 42" preserveAspectRatio="none">
<defs><linearGradient id="g4" x1="0" y1="0" x2="1" y2="1"><stop offset="0" stop-color="#01051c"/><stop offset=".5" stop-color="#061a44"/><stop offset="1" stop-color="#010312"/></linearGradient>
<filter id="b4" x="-40%" y="-40%" width="180%" height="180%"><feGaussianBlur stdDeviation="4"/></filter></defs>
<rect width="62" height="42" fill="url(#g4)"/>
<path d="M6 38C18 30 36 18 60 8" stroke="#11508a" stroke-width="11" fill="none" filter="url(#b4)" opacity=".8"/>
<ellipse cx="23" cy="28" rx="7" ry="3" fill="#2f9ac0" transform="rotate(-30 23 28)" filter="url(#b4)" opacity=".7"/>
</svg></div>
<span class="t" style="left:491px;top:547px;font-size:18.08px;line-height:23px;color:#0c0c0c;transform:scaleX(0.9136);">starry-sky.jpg</span>
<span class="t" style="left:1314px;top:547px;font-size:18.08px;line-height:23px;color:#0c0c0c;transform:scaleX(0.9090);">612x408</span>
<span class="t" style="left:1449px;top:547px;font-size:18.08px;line-height:23px;color:#0c0c0c;transform:scaleX(0.8558);">38.0 KB</span>
<svg class="i" style="left:1599px;top:544px;" width="30" height="30" viewBox="0 0 24 24"><path fill="#4a4a4a" d="M19 9h-4V3H9v6H5l7 7 7-7zM5 18v2h14v-2H5z"/></svg>
<svg class="i" style="left:1659px;top:544px;" width="30" height="30" viewBox="0 0 24 24"><path fill="#4a4a4a" d="M6 2C4.89 2 4 2.9 4 4V20A2 2 0 0 0 6 22H18A2 2 0 0 0 20 20V8L14 2M13 3.5L18.5 9H13M8.93 12.22H16V19.29L13.88 17.17L11.05 20L8.22 17.17L11.05 14.35"/></svg>
<svg class="i" style="left:1719px;top:544px;" width="30" height="30" viewBox="0 0 24 24"><path fill="#4a4a4a" d="M9.4 16.6L4.8 12l4.6-4.6L8 6l-6 6 6 6 1.4-1.4zm5.2 0l4.6-4.6-4.6-4.6L16 6l6 6-6 6-1.4-1.4z"/></svg>
<svg class="i" style="left:1779px;top:544px;" width="30" height="30" viewBox="0 0 24 24"><path fill="#4a4a4a" d="M3 17.25V21h3.75L17.81 9.94l-3.75-3.75L3 17.25zM20.71 7.04c.39-.39.39-1.02 0-1.41l-2.34-2.34c-.39-.39-1.02-.39-1.41 0l-1.83 1.83 3.75 3.75 1.83-1.83z"/></svg>
<svg class="i" style="left:1839px;top:544px;" width="30" height="30" viewBox="0 0 24 24"><path fill="#4a4a4a" d="M6 19c0 1.1.9 2 2 2h8c1.1 0 2-.9 2-2V7H6v12zM19 4h-3.5l-1-1h-5l-1 1H5v2h14V4z"/></svg>
<div class="b" style="left:362.25px;top:616.25px;width:22.5px;height:22.5px;border:2.5px solid #4d4d4d;border-radius:3px;box-sizing:border-box;"></div>
<div class="b" style="left:414px;top:610px;width:62.3px;height:33.75px;background:#888;border-radius:0px;overflow:hidden;"><svg width="62.300" height="33.750" viewBox="0 0 62 34" preserveAspectRatio="none">
<defs><radialGradient id="g5" cx="30.700" cy="15.500" r="34" gradientUnits="userSpaceOnUse"><stop offset="0" stop-color="#f7f7ef"/><stop offset=".2" stop-color="#f5f2e2"/><stop offset=".235" stop-color="#efb52c"/><stop offset=".4" stop-color="#e2990f"/><stop offset=".62" stop-color="#d27d0b"/><stop offset=".85" stop-color="#b55c0c"/><stop offset="1" stop-color="#9a470d"/></radialGradient>
<filter id="b5" x="-20%" y="-40%" width="140%" height="180%"><feGaussianBlur stdDeviation="1"/></filter></defs>
<rect width="62" height="34" fill="url(#g5)"/>
<path d="M0 29L6 26 11 23 16 27 24 30 34 31 46 30 56 28 62 29V34H0z" fill="#a04a0d" filter="url(#b5)" opacity=".9"/>
<path d="M0 33L20 31.500 40 32.500 62 32V34H0z" fill="#7a340e" filter="url(#b5)"/>
<path d="M9 27l3-3 3 3z" fill="#e0a832" filter="url(#b5)"/><path d="M15 27l5 4-2 1-5-4z" fill="#d0481c" filter="url(#b5)"/>
</svg></div>
<span class="t" style="left:491px;top:616px;font-size:18.08px;line-height:23px;color:#0c0c0c;transform:scaleX(0.9073);">solar-radiation-1.jpg</span>
<span class="t" style="left:1314px;top:616px;font-size:18.08px;line-height:23px;color:#0c0c0c;transform:scaleX(0.9090);">680x370</span>
<span class="t" style="left:1449px;top:616px;font-size:18.08px;line-height:23px;color:#0c0c0c;transform:scaleX(0.8558);">56.8 KB</span>
<svg class="i" style="left:1599px;top:612.5px;" width="30" height="30" viewBox="0 0 24 24"><path fill="#4a4a4a" d="M19 9h-4V3H9v6H5l7 7 7-7zM5 18v2h14v-2H5z"/></svg>
<svg class="i" style="left:1659px;top:612.5px;" width="30" height="30" viewBox="0 0 24 24"><path fill="#4a4a4a" d="M6 2C4.89 2 4 2.9 4 4V20A2 2 0 0 0 6 22H18A2 2 0 0 0 20 20V8L14 2M13 3.5L18.5 9H13M8.93 12.22H16V19.29L13.88 17.17L11.05 20L8.22 17.17L11.05 14.35"/></svg>
<svg class="i" style="left:1719px;top:612.5px;" width="30" height="30" viewBox="0 0 24 24"><path fill="#4a4a4a" d="M9.4 16.6L4.8 12l4.6-4.6L8 6l-6 6 6 6 1.4-1.4zm5.2 0l4.6-4.6-4.6-4.6L16 6l6 6-6 6-1.4-1.4z"/></svg>
<svg class="i" style="left:1779px;top:612.5px;" width="30" height="30" viewBox="0 0 24 24"><path fill="#4a4a4a" d="M3 17.25V21h3.75L17.81 9.94l-3.75-3.75L3 17.25zM20.71 7.04c.39-.39.39-1.02 0-1.41l-2.34-2.34c-.39-.39-1.02-.39-1.41 0l-1.83 1.83 3.75 3.75 1.83-1.83z"/></svg>
<svg class="i" style="left:1839px;top:612.5px;" width="30" height="30" viewBox="0 0 24 24"><path fill="#4a4a4a" d="M6 19c0 1.1.9 2 2 2h8c1.1 0 2-.9 2-2V7H6v12zM19 4h-3.5l-1-1h-5l-1 1H5v2h14V4z"/></svg>
<div class="b" style="left:362.25px;top:684.75px;width:22.5px;height:22.5px;border:2.5px solid #4d4d4d;border-radius:3px;box-sizing:border-box;"></div>
<div class="b" style="left:414px;top:675px;width:62.3px;height:41.75px;background:#888;border-radius:0px;overflow:hidden;"><svg width="62.300" height="41.750" viewBox="0 0 62 42" preserveAspectRatio="none">
<defs><linearGradient id="g6" x1="0" y1="0" x2="1" y2="0"><stop offset="0" stop-color="#a8432a"/><stop offset=".3" stop-color="#c4553a"/><stop offset=".55" stop-color="#c9b9b6"/><stop offset=".8" stop-color="#b4c1c6"/><stop offset="1" stop-color="#a3b8c0"/></linearGradient>
<filter id="b6" x="-30%" y="-30%" width="160%" height="160%"><feGaussianBlur stdDeviation="2"/></filter></defs>
<rect width="62" height="42" fill="url(#g6)"/>
<rect x="8" y="-2" width="22" height="7" fill="#c23c14" filter="url(#b6)"/>
<ellipse cx="39" cy="9" rx="7" ry="6" fill="#e79287" filter="url(#b6)"/>
<ellipse cx="52" cy="10" rx="10" ry="10" fill="#b9c3c8" filter="url(#b6)"/>
<ellipse cx="59" cy="24" rx="5" ry="5" fill="#4f8fac" filter="url(#b6)"/>
<rect x="0" y="31" width="62" height="12" fill="#b27a35" filter="url(#b6)"/>
<rect x="0" y="22" width="10" height="20" fill="#6a6a66" filter="url(#b6)"/>
<g stroke="#4d585e" stroke-width="1.500" fill="#c4c9cd">
<circle cx="56.500" cy="33.300" r="4.800"/><circle cx="47.700" cy="28.300" r="6.800"/><circle cx="36" cy="23.300" r="9.300"/><circle cx="-2" cy="8" r="10.500"/><circle cx="19.100" cy="15" r="12.300"/>
</g>
<path d="M16.500 19.500l6.500-9M33 24.500l6-3" stroke="#3d4348" stroke-width="1" fill="none"/>
<circle cx="19.100" cy="15" r="9" fill="none" stroke="#b99a86" stroke-width=".8" stroke-dasharray="1 2.500"/>
<rect x="15" y="32" width="7" height="3" fill="#d9d4c8"/><rect x="31" y="35.500" width="6" height="2.500" fill="#d9d4c8"/><rect x="14" y="36" width="9" height="6" fill="#b07a3c"/><rect x="30" y="38.500" width="8" height="4" fill="#b07a3c"/>
<rect x="22" y="39.500" width="9" height="2.500" fill="#d89a1c"/>
</svg></div>
<span class="t" style="left:490.09px;top:685px;font-size:18.08px;line-height:23px;color:#0c0c0c;transform:scaleX(0.9135);">pressure.jpg</span>
<span class="t" style="left:1314px;top:685px;font-size:18.08px;line-height:23px;color:#0c0c0c;transform:scaleX(0.9090);">612x408</span>
<span class="t" style="left:1449px;top:685px;font-size:18.08px;line-height:23px;color:#0c0c0c;transform:scaleX(0.8558);">43.9 KB</span>
<svg class="i" style="left:1599px;top:681px;" width="30" height="30" viewBox="0 0 24 24"><path fill="#4a4a4a" d="M19 9h-4V3H9v6H5l7 7 7-7zM5 18v2h14v-2H5z"/></svg>
<svg class="i" style="left:1659px;top:681px;" width="30" height="30" viewBox="0 0 24 24"><path fill="#4a4a4a" d="M6 2C4.89 2 4 2.9 4 4V20A2 2 0 0 0 6 22H18A2 2 0 0 0 20 20V8L14 2M13 3.5L18.5 9H13M8.93 12.22H16V19.29L13.88 17.17L11.05 20L8.22 17.17L11.05 14.35"/></svg>
<svg class="i" style="left:1719px;top:681px;" width="30" height="30" viewBox="0 0 24 24"><path fill="#4a4a4a" d="M9.4 16.6L4.8 12l4.6-4.6L8 6l-6 6 6 6 1.4-1.4zm5.2 0l4.6-4.6-4.6-4.6L16 6l6 6-6 6-1.4-1.4z"/></svg>
<svg class="i" style="left:1779px;top:681px;" width="30" height="30" viewBox="0 0 24 24"><path fill="#4a4a4a" d="M3 17.25V21h3.75L17.81 9.94l-3.75-3.75L3 17.25zM20.71 7.04c.39-.39.39-1.02 0-1.41l-2.34-2.34c-.39-.39-1.02-.39-1.41 0l-1.83 1.83 3.75 3.75 1.83-1.83z"/></svg>
<svg class="i" style="left:1839px;top:681px;" width="30" height="30" viewBox="0 0 24 24"><path fill="#4a4a4a" d="M6 19c0 1.1.9 2 2 2h8c1.1 0 2-.9 2-2V7H6v12zM19 4h-3.5l-1-1h-5l-1 1H5v2h14V4z"/></svg>
<div class="b" style="left:334px;top:988px;width:1565px;height:1px;background:#9d9d9d;"></div>
<span class="t" style="left:1268.45px;top:1015px;font-size:15.49px;line-height:20px;color:#0c0c0c;transform:scaleX(1.0476);">Items per page:</span>
<div class="b" style="left:1390px;top:998px;width:105px;height:51.5px;border:1px solid #6c6c6c;border-radius:5px;box-sizing:border-box;"></div>
<span class="t" style="left:1409.34px;top:1015px;font-size:15.49px;line-height:20px;color:#0c0c0c;transform:scaleX(1.0633);">10</span>
<svg class="i" style="left:1454px;top:1010px;" width="30" height="30" viewBox="0 0 24 24"><path fill="#575757" d="M7 10l5 5 5-5z"/></svg>
<span class="t" style="left:1539.73px;top:1013px;font-size:15.49px;line-height:20px;color:#0c0c0c;transform:scaleX(1.0674);">1 – 7 of 7</span>
<svg class="i" style="left:1664px;top:1009.5px;" width="30" height="30" viewBox="0 0 24 24"><path fill="#898989" d="M18.41 16.59L13.82 12l4.59-4.59L17 6l-6 6 6 6zM6 6h2v12H6z"/></svg>
<svg class="i" style="left:1723.5px;top:1009.5px;" width="30" height="30" viewBox="0 0 24 24"><path fill="#898989" d="M15.41 7.41L14 6l-6 6 6 6 1.41-1.41L10.83 12z"/></svg>
<svg class="i" style="left:1783.5px;top:1009.5px;" width="30" height="30" viewBox="0 0 24 24"><path fill="#898989" d="M10 6L8.59 7.41 13.17 12l-4.58 4.59L10 18l6-6z"/></svg>
<svg class="i" style="left:1843.8px;top:1009.5px;" width="30" height="30" viewBox="0 0 24 24"><path fill="#898989" d="M5.59 7.41L10.18 12l-4.59 4.59L7 18l6-6-6-6zM16 6h2v12h-2z"/></svg>
</main>
<div class="g" id="edit-image-dialog" role="dialog" aria-label="Edit image">
<div class="b" style="left:690px;top:126px;width:540px;height:828px;background:#ffffff;border-radius:5px;box-shadow:0 14px 19px -9px rgba(0,0,0,.2),0 30px 48px 4px rgba(0,0,0,.14),0 11px 58px 10px rgba(0,0,0,.12);overflow:hidden;"><div class="b" style="left:0px;top:0px;width:540px;height:80px;background:#00695c;"></div></div>
<span class="t" style="left:709.41px;top:149px;font-size:25.82px;line-height:33px;color:#ffffff;-webkit-text-stroke:0.45px #ffffff;transform:scaleX(0.9933);">Edit image</span>
<svg class="i" style="left:1175px;top:150.5px;" width="30" height="30" viewBox="0 0 24 24"><path fill="#ffffff" d="M19 6.41L17.59 5 12 10.59 6.41 5 5 6.41 10.59 12 5 17.59 6.41 19 12 13.41 17.59 19 19 17.59 13.41 12z"/></svg>
<div class="b" style="left:716.9px;top:237.8px;width:486.1px;height:76.2px;background:#f4eedf;border:3.2px solid #fdc62a;border-radius:9px;box-sizing:border-box;box-shadow:0 0 4px 2px rgba(255,214,170,.45);"></div>
<div class="b" style="left:724px;top:244px;width:473px;height:66.4px;background:#ebf3f3;border-radius:5px 5px 0 0;"></div>
<div class="b" style="left:724px;top:310px;width:473px;height:1px;background:#8b8782;"></div>
<span class="t" style="left:739.86px;top:250px;font-size:15.49px;line-height:20px;color:#6b6f6e;transform:scaleX(1.0366);">Name*</span>
<span class="t" style="left:740.4px;top:273px;font-size:20.66px;line-height:26px;color:#222222;transform:scaleX(1.0431);">forest-in-the-fog.jpeg</span>
<svg class="i" style="left:1095px;top:261.1px;" width="30" height="30" viewBox="0 0 24 24"><path fill="#5f6464" d="M19 6.41L17.59 5 12 10.59 6.41 5 5 6.41 10.59 12 5 17.59 6.41 19 12 13.41 17.59 19 19 17.59 13.41 12z"/></svg>
<div class="b" style="left:1150.3px;top:256.8px;width:39.3px;height:38.4px;border:2.8px solid #fdc62a;border-radius:50%;box-sizing:border-box;"></div>
<svg class="i" style="left:1154.9px;top:260.9px;" width="30" height="30" viewBox="0 0 24 24"><path fill="#00695c" d="M9 16.17L4.83 12l-1.42 1.41L9 19 21 7l-1.41-1.41z"/></svg>
<svg class="i" style="left:1150px;top:280px" width="40" height="40" viewBox="0 0 40 40">
<path d="M15.500 8.200C15.500 6.900 18.600 6.900 18.600 8.200V12.300H20.600C21.300 12.300 21.600 12.700 21.600 13.300H23.600C24.300 13.300 24.600 13.700 24.600 14.300H26.200C27 14.300 27.500 15.200 27.500 16.200V22.300L26.300 23.600 25.600 28.300H16.400L16 26 14.300 23 13 20.200 11.300 18.100V16.400H13.700L15.500 17.600z" fill="#ffffff" stroke="#0b0b0b" stroke-width="1" stroke-linejoin="round"/>
<path d="M15.500 17.600V20.600M18.600 12.300V16.600M21.600 13.300V16.600M24.600 14.300V17.400" fill="none" stroke="#0b0b0b" stroke-width="1"/>
<rect x="16.400" y="28.400" width="9.200" height="5" fill="#fdc62a" stroke="#0b0b0b" stroke-width="1"/>
<rect x="22" y="30" width="1.900" height="1.800" fill="#0b0b0b"/>
</svg>
<div class="b" style="left:1196.4px;top:267px;width:10.2px;height:10px;background:#fdc62a;border-radius:50%;"></div>
<div class="b" style="left:1205px;top:270px;width:10px;height:3px;background:#fdc62a;"></div>
<div class="b" style="left:1220px;top:270px;width:21.2px;height:3px;background:#fdc62a;"></div>
<div class="b" style="left:1245.8px;top:270px;width:9px;height:3px;background:#fdc62a;"></div>
<div class="b" style="left:1254.4px;top:244.2px;width:555px;height:75.3px;background:#fff0e1;border:3px solid #fdc62a;border-radius:9px;box-sizing:border-box;box-shadow:0 0 4px 1px rgba(251,192,45,.5);"></div>
<span class="t" style="left:1263.1px;top:248px;font-size:28px;line-height:36px;color:#0a0a0a;transform:scaleX(0.9976);">To change the name of the image,</span>
<span class="t" style="left:1262.1px;top:281px;font-size:28px;line-height:36px;color:#0a0a0a;">enter a new name and click the &quot;Save&quot; icon</span>
<div class="b" style="left:720px;top:339px;width:480px;height:584.5px;background:#f0f7f6;border-radius:5px;"></div>
<svg class="i" style="left:750.5px;top:370.2px;" width="30" height="30" viewBox="0 0 24 24"><path fill="#6e7474" d="M19 9h-4V3H9v6H5l7 7 7-7zM5 18v2h14v-2H5z"/></svg>
<svg class="i" style="left:821px;top:369.5px;" width="30" height="30" viewBox="0 0 24 24"><path fill="#6e7474" d="M6 2C4.89 2 4 2.9 4 4V20A2 2 0 0 0 6 22H18A2 2 0 0 0 20 20V8L14 2M13 3.5L18.5 9H13M8.93 12.22H16V19.29L13.88 17.17L11.05 20L8.22 17.17L11.05 14.35"/></svg>
<svg class="i" style="left:891px;top:369.5px;" width="30" height="30" viewBox="0 0 24 24"><path fill="#6e7474" d="M9.4 16.6L4.8 12l4.6-4.6L8 6l-6 6 6 6 1.4-1.4zm5.2 0l4.6-4.6-4.6-4.6L16 6l6 6-6 6-1.4-1.4z"/></svg>
<div class="b" style="left:1029px;top:363.2px;width:155px;height:44.6px;background:#00695c;border-radius:5px;"></div>
<span class="t" style="left:1047.97px;top:374px;font-size:18.08px;line-height:23px;color:#ffffff;-webkit-text-stroke:0.45px #ffffff;transform:scaleX(1.0251);">Update image</span>
<div class="b" style="left:736px;top:425px;width:448px;height:448px;background:#ffffff;border:1px solid #dde3e2;border-radius:5px;box-sizing:border-box;overflow:hidden;"><svg style="position:absolute;left:0;top:75px" width="446" height="296" viewBox="0 0 446 296" preserveAspectRatio="none">
<defs>
<linearGradient id="fg0" x1="0" y1="0" x2="0" y2="1"><stop offset="0" stop-color="#e5ece7"/><stop offset=".12" stop-color="#dde4de"/><stop offset=".24" stop-color="#c9d1c8"/><stop offset=".33" stop-color="#b1b9ad"/><stop offset=".42" stop-color="#9aa492"/><stop offset=".5" stop-color="#88947f"/><stop offset=".6" stop-color="#7b8b76"/><stop offset=".75" stop-color="#5f735a"/><stop offset=".9" stop-color="#4a6040"/><stop offset="1" stop-color="#3c5233"/></linearGradient>
<linearGradient id="fg1" x1="0" y1="0" x2="0" y2="1"><stop offset="0" stop-color="#74895c"/><stop offset=".3" stop-color="#5c7840"/><stop offset=".65" stop-color="#3d5829"/><stop offset="1" stop-color="#293e1c"/></linearGradient>
<filter id="fb8" filterUnits="userSpaceOnUse" x="-60" y="-60" width="566" height="416"><feGaussianBlur stdDeviation="11"/></filter>
<filter id="fb4" filterUnits="userSpaceOnUse" x="-60" y="-60" width="566" height="416"><feGaussianBlur stdDeviation="4.500"/></filter>
<filter id="fb2" x="-30%" y="-30%" width="160%" height="160%"><feGaussianBlur stdDeviation="2.600"/></filter>
<filter id="fb1" x="-20%" y="-5%" width="140%" height="110%"><feGaussianBlur stdDeviation="0.600"/></filter>
<filter id="fn" x="0" y="0" width="100%" height="100%" color-interpolation-filters="sRGB"><feTurbulence type="fractalNoise" baseFrequency="0.065" numOctaves="4" seed="5"/>
<feColorMatrix type="matrix" values="0 0 0 0 0.090  0 0 0 0 0.170  0 0 0 0 0.060  2.600 0 0 0 -1.050"/></filter>
<filter id="fn2" x="0" y="0" width="100%" height="100%" color-interpolation-filters="sRGB"><feTurbulence type="fractalNoise" baseFrequency="0.140" numOctaves="2" seed="23"/>
<feColorMatrix type="matrix" values="0 0 0 0 0.520  0 0 0 0 0.700  0 0 0 0 0.340  0 2.800 0 0 -1.450"/></filter>
<linearGradient id="fm" x1="0" y1="0" x2="0" y2="1"><stop offset="0" stop-color="#fff" stop-opacity="0"/><stop offset=".36" stop-color="#fff" stop-opacity="0"/><stop offset=".5" stop-color="#fff" stop-opacity=".3"/><stop offset=".66" stop-color="#fff" stop-opacity=".85"/><stop offset="1" stop-color="#fff" stop-opacity="1"/></linearGradient>
<mask id="fmask"><rect width="446" height="296" fill="url(#fm)"/></mask>
</defs>
<rect width="446" height="296" fill="url(#fg0)"/>
<ellipse cx="330" cy="200" rx="190" ry="55" fill="#4f6552" opacity=".7" filter="url(#fb8)"/>
<ellipse cx="230" cy="120" rx="70" ry="42" fill="#8a978a" opacity=".45" filter="url(#fb8)"/>
<ellipse cx="45" cy="92" rx="75" ry="36" fill="#cdd4cc" opacity=".4" filter="url(#fb8)"/>
<ellipse cx="405" cy="100" rx="65" ry="40" fill="#c2cac1" opacity=".5" filter="url(#fb8)"/>
<ellipse cx="60" cy="150" rx="80" ry="14" fill="#8b9784" opacity=".6" filter="url(#fb8)"/>
<path d="M-10 150L40 157 90 172 150 198 215 228 270 246 340 256 456 264V306H-10z" fill="url(#fg1)" filter="url(#fb4)"/>
<path d="M250 306L300 222 370 196 456 190V306z" fill="#47643d" opacity=".7" filter="url(#fb8)"/>
<ellipse cx="72" cy="203" rx="52" ry="13" fill="#6f9549" opacity=".45" transform="rotate(20 72 203)" filter="url(#fb4)"/>
<ellipse cx="150" cy="224" rx="34" ry="9" fill="#689245" opacity=".4" transform="rotate(22 150 224)" filter="url(#fb4)"/>
<ellipse cx="60" cy="266" rx="90" ry="26" fill="#27421a" opacity=".75" filter="url(#fb8)"/>
<ellipse cx="250" cy="290" rx="230" ry="16" fill="#2b451d" opacity=".8" filter="url(#fb8)"/>
<ellipse cx="385" cy="276" rx="85" ry="22" fill="#27401c" opacity=".75" filter="url(#fb8)"/>
<rect width="446" height="296" filter="url(#fn)" mask="url(#fmask)" opacity=".85"/>
<ellipse cx="440" cy="150" rx="45" ry="26" fill="#b3bbae" opacity=".55" filter="url(#fb8)"/>
<rect width="446" height="296" filter="url(#fn2)" mask="url(#fmask)" opacity=".12"/>
<g fill="#55685a" opacity=".3" filter="url(#fb4)">
<ellipse cx="215" cy="92" rx="15" ry="7"/><ellipse cx="203" cy="78" rx="10" ry="9"/><ellipse cx="287" cy="113" rx="11" ry="12"/><ellipse cx="318" cy="114" rx="9" ry="7"/><ellipse cx="100" cy="79" rx="12" ry="5"/><ellipse cx="250" cy="203" rx="17" ry="9"/><ellipse cx="287" cy="150" rx="14" ry="22"/><ellipse cx="350" cy="170" rx="16" ry="24"/><ellipse cx="395" cy="185" rx="18" ry="20"/><ellipse cx="140" cy="120" rx="10" ry="16"/>
</g>
<g stroke="#d3d9cd" stroke-width="1.200" opacity=".42" filter="url(#fb1)">
<path d="M179 130V198M201 135V190M215 100V245M243 190V296M250 165V262M287 135V240M318 122V258M100 82V168M372 210V290M412 215V296M355 180V230M430 240V296"/>
</g>
<g filter="url(#fb2)">
<ellipse cx="102" cy="215" rx="12" ry="10" fill="#45222a" opacity=".8"/>
<ellipse cx="200" cy="284" rx="11" ry="9" fill="#4b1f2b" opacity=".8"/>
<ellipse cx="124" cy="258" rx="7" ry="9" fill="#2a231f" opacity=".75"/>
<ellipse cx="246" cy="206" rx="11" ry="8" fill="#54373e" opacity=".6"/>
<ellipse cx="245" cy="168" rx="4" ry="9" fill="#9a6d6d" opacity=".5"/>
<ellipse cx="68" cy="153" rx="18" ry="4" fill="#8a6060" opacity=".5" transform="rotate(18 68 153)"/>
<ellipse cx="402" cy="202" rx="28" ry="8" fill="#8f7068" opacity=".5" transform="rotate(12 402 202)"/>
<ellipse cx="176" cy="110" rx="4" ry="5" fill="#b08a8a" opacity=".5"/>
</g>
</svg></div>
<span class="t" style="left:736.3px;top:883px;font-size:18.59px;line-height:24px;color:#a6a6a6;transform:scaleX(0.9951);">275x183</span>
<div class="b" style="left:818px;top:884px;width:1px;height:23.5px;background:#d7dcdb;"></div>
<span class="t" style="left:829.6px;top:883px;font-size:18.59px;line-height:24px;color:#a6a6a6;transform:scaleX(0.9480);">5.2 KB</span>
</div>
</body></html>
